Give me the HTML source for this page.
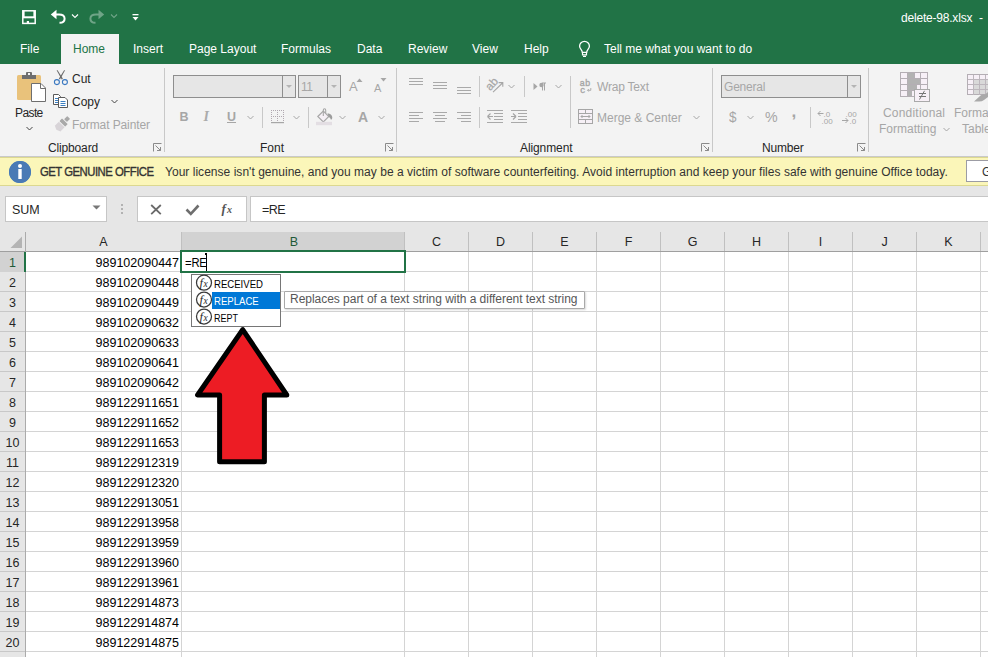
<!DOCTYPE html>
<html><head><meta charset="utf-8">
<style>
*{box-sizing:border-box}
html,body{margin:0;padding:0}
body{width:988px;height:657px;overflow:hidden;position:relative;background:#fff;font-family:"Liberation Sans",sans-serif;color:#262626}
.a{position:absolute}
.t{position:absolute;white-space:pre;line-height:1}
#top{left:0;top:0;width:988px;height:64px;background:#217346}
.tab{position:absolute;top:43px;font-size:12px;color:#fff;white-space:pre;line-height:1}
#ribbon{left:0;top:64px;width:988px;height:93px;background:#f3f3f3;border-bottom:1px solid #c9c9c9}
.sep{position:absolute;width:1px;background:#c8c8c8}
.dis{color:#a6a6a6}
.lbl{position:absolute;top:142px;font-size:12px;color:#262626;white-space:pre;line-height:1}
#yb{left:0;top:157px;width:988px;height:29px;background:#fbf6b9;border-top:1px solid #dcd890;border-bottom:1px solid #dcd890}
#fb{left:0;top:186px;width:988px;height:46px;background:#e6e6e6}
.box{position:absolute;background:#fff;border:1px solid #c6c6c6}
#hdr{left:0;top:232px;width:988px;height:20px;background:#e6e6e6;border-bottom:1px solid #9f9f9f}
.ch{position:absolute;top:232px;height:19px;font-size:12.5px;color:#262626;text-align:center;line-height:21px}
.cv{position:absolute;top:232px;width:1px;height:19px;background:#c0c0c0}
.gv{position:absolute;top:252px;width:1px;height:405px;background:#d4d4d4}
.gh{position:absolute;left:26px;width:962px;height:1px;background:#d4d4d4}
.rh{position:absolute;left:0;width:25px;height:20px;font-size:12.5px;text-align:center;line-height:22px;color:#262626}
.rn{position:absolute;left:26px;width:153px;height:20px;font-size:12.5px;text-align:right;line-height:23px;color:#000;font-kerning:none}
</style></head>
<body>
<!-- title + tabs -->
<div id="top" class="a"></div>
<div class="a" style="left:61px;top:34px;width:58px;height:30px;background:#f3f3f3"></div>
<div class="tab" style="left:20px">File</div>
<div class="tab" style="left:73px;color:#217346">Home</div>
<div class="tab" style="left:133px">Insert</div>
<div class="tab" style="left:189px">Page Layout</div>
<div class="tab" style="left:281px">Formulas</div>
<div class="tab" style="left:357px">Data</div>
<div class="tab" style="left:408px">Review</div>
<div class="tab" style="left:472px">View</div>
<div class="tab" style="left:524px">Help</div>
<div class="tab" style="left:604px">Tell me what you want to do</div>
<div class="t" style="left:901px;top:12px;font-size:12px;color:#fff;letter-spacing:-0.2px">delete-98.xlsx</div><div class="t" style="left:979px;top:12px;font-size:12px;color:#fff">-</div>

<!-- ribbon -->
<div id="ribbon" class="a"></div>
<!-- Clipboard group -->
<svg class="a" style="left:14px;top:70px" width="34" height="34" viewBox="0 0 34 34">
 <rect x="3" y="5" width="24" height="25" rx="1.5" fill="#e9c27b"/>
 <rect x="8" y="5" width="14" height="4" fill="#6e6e6e"/>
 <rect x="12" y="2" width="6" height="4" rx="1" fill="#6e6e6e"/>
 <rect x="14" y="3" width="2" height="2" fill="#f3f3f3"/>
 <path d="M17.5 13.5 H27 L31.5 18 V31.5 H17.5 Z" fill="#fff" stroke="#6e6e6e" stroke-width="1"/>
 <path d="M26.5 13.5 V18.5 H31.5" fill="none" stroke="#6e6e6e" stroke-width="1"/>
</svg>
<div class="t" style="left:15px;top:107px;font-size:12px;letter-spacing:-0.6px;color:#262626">Paste</div>
<svg class="a" style="left:26px;top:126px" width="7" height="5" viewBox="0 0 7 5"><path d="M0.5 1 L3.5 4 L6.5 1" fill="none" stroke="#444" stroke-width="1"/></svg>

<svg class="a" style="left:53px;top:69px" width="17" height="17" viewBox="0 0 17 17">
 <path d="M3.6 1.2 L4.6 1.2 L9.9 9.8 L8.7 10.6 Z" fill="#6a6a6a"/>
 <path d="M12.1 1.2 L11.1 1.2 L5.8 9.8 L7 10.6 Z" fill="#6a6a6a"/>
 <circle cx="3.9" cy="13.1" r="2.5" fill="none" stroke="#3a78c0" stroke-width="1.1"/>
 <circle cx="11.9" cy="13.1" r="2.5" fill="none" stroke="#3a78c0" stroke-width="1.1"/>
</svg>
<div class="t" style="left:72px;top:73px;font-size:12px;color:#262626">Cut</div>

<svg class="a" style="left:52px;top:93px" width="17" height="16" viewBox="0 0 17 16">
 <path d="M1.5 1.5 H6.5 L8.5 3.5 V11.5 H1.5 Z" fill="#fff" stroke="#5a5a5a" stroke-width="1"/>
 <path d="M6.5 4.5 H13 L15.5 7 V14.5 H6.5 Z" fill="#fff" stroke="#5a5a5a" stroke-width="1"/>
 <path d="M3 5.5 H6 M3 7.5 H6 M3 9.5 H6" stroke="#3c7fc1" stroke-width="1"/>
 <path d="M8.5 8.5 H13.5 M8.5 10.5 H13.5 M8.5 12.5 H13.5" stroke="#3c7fc1" stroke-width="1"/>
</svg>
<div class="t" style="left:72px;top:96px;font-size:12px;color:#262626">Copy</div>
<svg class="a" style="left:111px;top:99px" width="7" height="5" viewBox="0 0 7 5"><path d="M0.5 1 L3.5 4 L6.5 1" fill="none" stroke="#444" stroke-width="1"/></svg>

<svg class="a" style="left:52px;top:116px" width="18" height="16" viewBox="0 0 18 16">
 <g transform="rotate(45 10.6 7.6)">
  <rect x="8.6" y="-1" width="4" height="4.4" rx="0.6" fill="#a9a9a9"/>
  <rect x="6.6" y="4.4" width="8" height="3.6" rx="0.5" fill="#a9a9a9"/>
  <path d="M6.6 8.9 H14.6 V14.6 L10.6 16.4 L6.6 14.6 Z" fill="#d8d4d8"/>
 </g>
</svg>
<div class="t dis" style="left:72px;top:119px;font-size:12px;letter-spacing:-0.1px">Format Painter</div>
<div class="t" style="left:48px;top:142px;font-size:12px;letter-spacing:-0.15px;color:#262626">Clipboard</div>
<svg class="a" style="left:153px;top:143px" width="9" height="9" viewBox="0 0 9 9"><path d="M0.5 8.5 V0.5 H8.5 M2.5 2.5 L7.5 7.5 M4 7.5 H7.5 V4" fill="none" stroke="#8a8a8a" stroke-width="1"/></svg>
<div class="sep" style="left:164px;top:68px;height:84px"></div>
<!-- Font group -->
<div class="a" style="left:173px;top:75px;width:123px;height:23px;background:#e6e6e6;border:1px solid #8e8e8e"></div>
<div class="a" style="left:282px;top:75px;width:1px;height:23px;background:#8e8e8e"></div>
<svg class="a" style="left:285px;top:84px" width="8" height="5" viewBox="0 0 8 5"><path d="M1 1 H7 L4 4 Z" fill="#b4b4b4"/></svg>
<div class="a" style="left:298px;top:75px;width:43px;height:23px;background:#e6e6e6;border:1px solid #8e8e8e"></div>
<div class="a" style="left:327px;top:75px;width:1px;height:23px;background:#8e8e8e"></div>
<svg class="a" style="left:330px;top:84px" width="8" height="5" viewBox="0 0 8 5"><path d="M1 1 H7 L4 4 Z" fill="#b4b4b4"/></svg>
<div class="t dis" style="left:301px;top:81px;font-size:12px;letter-spacing:-0.5px">11</div>
<div class="t dis" style="left:349px;top:80px;font-size:13px">A</div>
<svg class="a" style="left:356px;top:78px" width="7" height="4" viewBox="0 0 7 4"><path d="M0.5 4 L3.5 0.5 L6.5 4 Z" fill="#a6a6a6"/></svg>
<div class="t dis" style="left:374px;top:83px;font-size:11px">A</div>
<svg class="a" style="left:380px;top:78px" width="7" height="4" viewBox="0 0 7 4"><path d="M0.5 0 L3.5 3.5 L6.5 0 Z" fill="#a6a6a6"/></svg>

<div class="t dis" style="left:179.5px;top:111px;font-size:12.5px;font-weight:bold">B</div>
<div class="t dis" style="left:203.5px;top:110px;font-size:14px;font-style:italic;font-weight:bold;font-family:'Liberation Serif',serif;color:#ababab">I</div>
<div class="t dis" style="left:227px;top:111px;font-size:12.5px;font-weight:bold;text-decoration:underline">U</div>
<svg class="a" style="left:247px;top:115px" width="7" height="5" viewBox="0 0 7 5"><path d="M0.5 1 L3.5 4 L6.5 1" fill="none" stroke="#a6a6a6" stroke-width="1"/></svg>
<div class="sep" style="left:262px;top:107px;height:21px"></div>
<svg class="a" style="left:270px;top:109px" width="15" height="15" viewBox="0 0 15 15">
 <g fill="#b0a8b0"><rect x="1" y="1" width="1" height="1"/><rect x="3" y="1" width="1" height="1"/><rect x="5" y="1" width="1" height="1"/><rect x="7" y="1" width="1" height="1"/><rect x="9" y="1" width="1" height="1"/><rect x="11" y="1" width="1" height="1"/><rect x="13" y="1" width="1" height="1"/>
 <rect x="1" y="3" width="1" height="1"/><rect x="7" y="3" width="1" height="1"/><rect x="13" y="3" width="1" height="1"/>
 <rect x="1" y="5" width="1" height="1"/><rect x="7" y="5" width="1" height="1"/><rect x="13" y="5" width="1" height="1"/>
 <rect x="1" y="7" width="1" height="1"/><rect x="3" y="7" width="1" height="1"/><rect x="5" y="7" width="1" height="1"/><rect x="7" y="7" width="1" height="1"/><rect x="9" y="7" width="1" height="1"/><rect x="11" y="7" width="1" height="1"/><rect x="13" y="7" width="1" height="1"/>
 <rect x="1" y="9" width="1" height="1"/><rect x="7" y="9" width="1" height="1"/><rect x="13" y="9" width="1" height="1"/>
 <rect x="1" y="11" width="1" height="1"/><rect x="7" y="11" width="1" height="1"/><rect x="13" y="11" width="1" height="1"/></g>
 <rect x="1" y="13" width="13" height="1.2" fill="#a6a6a6"/>
</svg>
<svg class="a" style="left:293px;top:115px" width="7" height="5" viewBox="0 0 7 5"><path d="M0.5 1 L3.5 4 L6.5 1" fill="none" stroke="#a6a6a6" stroke-width="1"/></svg>
<div class="sep" style="left:308px;top:107px;height:21px"></div>
<svg class="a" style="left:315px;top:107px" width="19" height="19" viewBox="0 0 19 19">
 <path d="M2.8 9.5 L8.3 4 L13.8 9.5 L8.3 15 Z" fill="#f5eff5" stroke="#a6a6a6" stroke-width="1.1"/>
 <path d="M8.3 9 V3.2 Q8.3 1.8 9.5 1.8 Q10.7 1.8 10.7 3.2 V6" fill="none" stroke="#a6a6a6" stroke-width="1.1"/>
 <path d="M12.5 6.3 Q16.8 6.8 17.3 10.2 Q17.4 12.6 16 12.8 Q15.4 10.8 13.6 9.8 Z" fill="#9c9c9c"/>
 <rect x="1" y="14.8" width="16" height="3.4" fill="#e3dee3"/>
</svg>
<svg class="a" style="left:339px;top:115px" width="7" height="5" viewBox="0 0 7 5"><path d="M0.5 1 L3.5 4 L6.5 1" fill="none" stroke="#a6a6a6" stroke-width="1"/></svg>
<div class="t dis" style="left:358px;top:110px;font-size:14px;font-weight:bold">A</div>
<svg class="a" style="left:378px;top:115px" width="7" height="5" viewBox="0 0 7 5"><path d="M0.5 1 L3.5 4 L6.5 1" fill="none" stroke="#a6a6a6" stroke-width="1"/></svg>
<div class="t" style="left:260px;top:142px;font-size:12px;color:#262626">Font</div>
<svg class="a" style="left:385px;top:143px" width="9" height="9" viewBox="0 0 9 9"><path d="M0.5 8.5 V0.5 H8.5 M2.5 2.5 L7.5 7.5 M4 7.5 H7.5 V4" fill="none" stroke="#8a8a8a" stroke-width="1"/></svg>
<div class="sep" style="left:396px;top:68px;height:84px"></div>
<!-- Alignment group -->
<svg class="a" style="left:405px;top:74px" width="70" height="24" viewBox="0 0 70 24" shape-rendering="crispEdges">
 <g fill="#a9a9a9">
  <rect x="4" y="4" width="14" height="1"/><rect x="4" y="7" width="14" height="1"/><rect x="4" y="10" width="14" height="1"/>
  <rect x="28" y="8" width="14" height="1"/><rect x="28" y="11" width="14" height="1"/><rect x="28" y="14" width="14" height="1"/>
  <rect x="52" y="13" width="14" height="1"/><rect x="52" y="16" width="14" height="1"/><rect x="52" y="19" width="14" height="1"/>
 </g>
</svg>
<svg class="a" style="left:405px;top:108px" width="70" height="18" viewBox="0 0 70 18" shape-rendering="crispEdges">
 <g fill="#a9a9a9">
  <rect x="4" y="4" width="14" height="1"/><rect x="4" y="7" width="10" height="1"/><rect x="4" y="10" width="14" height="1"/><rect x="4" y="13" width="10" height="1"/>
  <rect x="28" y="4" width="14" height="1"/><rect x="30" y="7" width="10" height="1"/><rect x="28" y="10" width="14" height="1"/><rect x="30" y="13" width="10" height="1"/>
  <rect x="52" y="4" width="14" height="1"/><rect x="56" y="7" width="10" height="1"/><rect x="52" y="10" width="14" height="1"/><rect x="56" y="13" width="10" height="1"/>
 </g>
</svg>
<div class="sep" style="left:479px;top:76px;height:21px"></div>
<div class="sep" style="left:479px;top:107px;height:21px"></div>
<svg class="a" style="left:485px;top:76px" width="20" height="19" viewBox="0 0 20 19">
 <text x="0" y="0" transform="translate(5.2,15.2) rotate(-48)" font-family="Liberation Sans" font-size="11.5" fill="#a6a6a6" stroke="#a6a6a6" stroke-width="0.25">ab</text>
 <path d="M8 16.2 L17.5 7 M13.6 6.6 H17.8 V10.8" fill="none" stroke="#a6a6a6" stroke-width="1.1"/>
</svg>
<svg class="a" style="left:508px;top:84px" width="7" height="5" viewBox="0 0 7 5"><path d="M0.5 1 L3.5 4 L6.5 1" fill="none" stroke="#a6a6a6" stroke-width="1"/></svg>
<div class="sep" style="left:524px;top:76px;height:21px"></div>
<svg class="a" style="left:533px;top:82px" width="14" height="9" viewBox="0 0 14 9">
 <path d="M0.5 1 L4.5 4.5 L0.5 8 Z" fill="#a6a6a6"/>
 <path d="M9 1 H13 M9.5 1 V8.5 M11.5 1 V8.5" stroke="#a6a6a6" stroke-width="1"/>
 <circle cx="8.5" cy="3" r="2.2" fill="#a6a6a6"/>
</svg>
<svg class="a" style="left:555px;top:84px" width="7" height="5" viewBox="0 0 7 5"><path d="M0.5 1 L3.5 4 L6.5 1" fill="none" stroke="#a6a6a6" stroke-width="1"/></svg>
<svg class="a" style="left:486px;top:108px" width="44" height="18" viewBox="0 0 44 18" shape-rendering="crispEdges">
 <g fill="#a9a9a9">
  <rect x="1" y="2" width="16" height="1"/><rect x="8" y="5" width="9" height="1"/><rect x="8" y="8" width="9" height="1"/><rect x="8" y="11" width="9" height="1"/><rect x="1" y="14" width="16" height="1"/>
  <rect x="25" y="2" width="16" height="1"/><rect x="32" y="5" width="9" height="1"/><rect x="32" y="8" width="9" height="1"/><rect x="32" y="11" width="9" height="1"/><rect x="25" y="14" width="16" height="1"/>
 </g>
 <path d="M1.5 8.5 L4.5 5.5 M1.5 8.5 L4.5 11.5 M2 8.5 H7" fill="none" stroke="#a6a6a6" stroke-width="1.2" shape-rendering="auto"/>
 <path d="M30 8.5 L27 5.5 M30 8.5 L27 11.5 M25 8.5 H29.5" fill="none" stroke="#a6a6a6" stroke-width="1.2" shape-rendering="auto"/>
</svg>
<div class="sep" style="left:570px;top:76px;height:52px"></div>
<svg class="a" style="left:579px;top:77px" width="15" height="17" viewBox="0 0 15 17">
 <text x="0.8" y="8.8" font-family="Liberation Sans" font-size="8.8" fill="#a6a6a6" stroke="#a6a6a6" stroke-width="0.35" letter-spacing="0.5">ab</text>
 <text x="1.2" y="15.6" font-family="Liberation Sans" font-size="9.5" fill="#a6a6a6" stroke="#a6a6a6" stroke-width="0.35">c</text>
 <path d="M11.8 11 V13.3 H8.6 M9.8 12 L8.5 13.3 L9.8 14.6" fill="none" stroke="#a6a6a6" stroke-width="0.9"/>
</svg>
<div class="t dis" style="left:597px;top:81px;font-size:12px;letter-spacing:-0.2px">Wrap Text</div>
<svg class="a" style="left:577px;top:108px" width="17" height="17" viewBox="0 0 17 17" shape-rendering="crispEdges">
 <rect x="1.5" y="1.5" width="14" height="14" fill="#f6f0f6" stroke="#a6a6a6" stroke-width="1"/>
 <path d="M1.5 5.5 H15.5 M1.5 11.5 H15.5 M8.5 1.5 V5.5 M8.5 11.5 V15.5" stroke="#a6a6a6" stroke-width="1" fill="none"/>
 <path d="M4 8.5 H13 M5.5 7 L4 8.5 L5.5 10 M11.5 7 L13 8.5 L11.5 10" stroke="#a6a6a6" stroke-width="1" fill="none" shape-rendering="auto"/>
</svg>
<div class="t dis" style="left:597px;top:112px;font-size:12px">Merge &amp; Center</div>
<svg class="a" style="left:693px;top:115px" width="7" height="5" viewBox="0 0 7 5"><path d="M0.5 1 L3.5 4 L6.5 1" fill="none" stroke="#a6a6a6" stroke-width="1"/></svg>
<div class="t" style="left:520px;top:142px;font-size:12px;letter-spacing:-0.1px;color:#262626">Alignment</div>
<svg class="a" style="left:701px;top:143px" width="9" height="9" viewBox="0 0 9 9"><path d="M0.5 8.5 V0.5 H8.5 M2.5 2.5 L7.5 7.5 M4 7.5 H7.5 V4" fill="none" stroke="#8a8a8a" stroke-width="1"/></svg>
<div class="sep" style="left:712px;top:68px;height:84px"></div>

<!-- Number group -->
<div class="a" style="left:721px;top:75px;width:140px;height:23px;background:#e6e6e6;border:1px solid #8e8e8e"></div>
<div class="a" style="left:847px;top:75px;width:1px;height:23px;background:#8e8e8e"></div>
<svg class="a" style="left:850px;top:84px" width="8" height="5" viewBox="0 0 8 5"><path d="M1 1 H7 L4 4 Z" fill="#b4b4b4"/></svg>
<div class="t dis" style="left:724px;top:81px;font-size:12px;letter-spacing:-0.2px">General</div>
<div class="t dis" style="left:728.5px;top:109px;font-size:15px;transform:scaleX(0.9);transform-origin:0 0">$</div>
<svg class="a" style="left:747px;top:115px" width="7" height="5" viewBox="0 0 7 5"><path d="M0.5 1 L3.5 4 L6.5 1" fill="none" stroke="#a6a6a6" stroke-width="1"/></svg>
<div class="t dis" style="left:765px;top:110px;font-size:14.2px">%</div>
<div class="t dis" style="left:791.5px;top:103px;font-size:17px;font-weight:bold">,</div>
<div class="sep" style="left:810px;top:107px;height:21px"></div>
<svg class="a" style="left:817px;top:110px" width="17" height="14" viewBox="0 0 17 14">
 <text x="6.5" y="6.5" font-family="Liberation Sans" font-size="8" fill="#a6a6a6">.0</text>
 <text x="4.5" y="13.5" font-family="Liberation Sans" font-size="8" fill="#a6a6a6">.00</text>
 <path d="M1 3.5 H6.5 M3.5 1 L1 3.5 L3.5 6" fill="none" stroke="#a6a6a6" stroke-width="1"/>
</svg>
<svg class="a" style="left:841px;top:110px" width="17" height="14" viewBox="0 0 17 14">
 <text x="4.5" y="6.5" font-family="Liberation Sans" font-size="8" fill="#a6a6a6">.00</text>
 <text x="8.5" y="13.5" font-family="Liberation Sans" font-size="8" fill="#a6a6a6">.0</text>
 <path d="M1 10.5 H7 M4.5 8 L7 10.5 L4.5 13" fill="none" stroke="#a6a6a6" stroke-width="1"/>
</svg>
<div class="t" style="left:762px;top:142px;font-size:12px;letter-spacing:-0.2px;color:#262626">Number</div>
<svg class="a" style="left:857px;top:143px" width="9" height="9" viewBox="0 0 9 9"><path d="M0.5 8.5 V0.5 H8.5 M2.5 2.5 L7.5 7.5 M4 7.5 H7.5 V4" fill="none" stroke="#8a8a8a" stroke-width="1"/></svg>
<div class="sep" style="left:868px;top:68px;height:84px"></div>

<!-- Styles group (partial) -->
<svg class="a" style="left:899px;top:71px" width="33" height="32" viewBox="0 0 33 32" shape-rendering="crispEdges">
 <rect x="1.5" y="1.5" width="27" height="24" fill="#f7f0f7" stroke="#b4aeb4" stroke-width="1"/>
 <path d="M1.5 7.5 H28.5 M1.5 13.5 H28.5 M1.5 19.5 H28.5 M8.5 1.5 V25.5 M15.5 1.5 V25.5 M21.5 1.5 V25.5" stroke="#b4aeb4" stroke-width="1" fill="none"/>
 <rect x="9" y="2" width="6" height="5" fill="#b2b2b2"/>
 <rect x="9" y="8" width="12" height="5" fill="#b2b2b2"/>
 <rect x="9" y="14" width="9" height="5" fill="#b2b2b2"/>
 <rect x="9" y="20" width="4" height="5" fill="#b2b2b2"/>
 <rect x="15.5" y="18.5" width="15" height="12" fill="#f7f0f7" stroke="#a9a9a9" stroke-width="1.2"/>
 <path d="M19.5 22.5 H26.5 M19.5 25.5 H26.5" stroke="#777" stroke-width="1" fill="none"/>
 <path d="M20.5 28.5 L25.5 19.8" stroke="#777" stroke-width="1" fill="none" shape-rendering="auto"/>
</svg>
<div class="t dis" style="left:883px;top:107px;font-size:12px;letter-spacing:0.2px">Conditional</div>
<div class="t dis" style="left:879px;top:123px;font-size:12px">Formatting</div>
<svg class="a" style="left:943px;top:127px" width="7" height="5" viewBox="0 0 7 5"><path d="M0.5 1 L3.5 4 L6.5 1" fill="none" stroke="#a6a6a6" stroke-width="1"/></svg>
<svg class="a" style="left:966px;top:73px" width="22" height="32" viewBox="0 0 22 32" shape-rendering="crispEdges">
 <rect x="1.5" y="1.5" width="28" height="20" fill="#f7f0f7" stroke="#b4aeb4" stroke-width="1"/>
 <rect x="8" y="7" width="20" height="14" fill="#d9d9d9"/>
 <path d="M1.5 6.5 H29.5 M1.5 11.5 H29.5 M1.5 16.5 H29.5 M7.5 1.5 V21.5 M13.5 1.5 V21.5 M19.5 1.5 V21.5" stroke="#bdb7bd" stroke-width="1" fill="none"/>
 <path d="M8 28.5 L14 23 Q16 20.5 19 21.5 L22 19 L22 24 L18 27 Q16 28.5 13 28.5 Z" fill="#a9a9a9" shape-rendering="auto"/>
</svg>
<div class="t dis" style="left:954px;top:107px;font-size:12px">Format</div>
<div class="t dis" style="left:962px;top:123px;font-size:12px">Table</div>




<!-- yellow bar -->
<div id="yb" class="a"></div>
<div class="a" style="left:9px;top:161px;width:22px;height:22px;border-radius:50%;background:#3e7bbd"></div>
<div class="t" style="left:40px;top:166px;font-size:12px;color:#333;-webkit-text-stroke:0.35px #333;letter-spacing:-0.5px;transform:scaleX(0.94);transform-origin:0 0">GET GENUINE OFFICE</div>
<div class="t" style="left:165px;top:166px;font-size:12px;color:#333;letter-spacing:0.03px">Your license isn't genuine, and you may be a victim of software counterfeiting. Avoid interruption and keep your files safe with genuine Office today.</div>

<!-- formula bar -->
<div id="fb" class="a"></div>
<div class="box" style="left:5px;top:196px;width:102px;height:26px"></div>
<div class="t" style="left:12px;top:204px;font-size:12.5px;color:#262626">SUM</div>
<div class="box" style="left:137px;top:196px;width:110px;height:26px"></div>
<div class="box" style="left:250px;top:196px;width:740px;height:26px"></div>
<div class="t" style="left:262px;top:204px;font-size:12.5px;color:#262626;letter-spacing:-0.6px">=RE</div>

<!-- headers -->
<div id="hdr" class="a"></div>
<div class="a" style="left:181px;top:232px;width:223px;height:19px;background:#d2d2d2"></div>
<div class="cv" style="left:25px"></div>
<div class="cv" style="left:181px"></div>
<div class="cv" style="left:404px"></div>
<div class="cv" style="left:468px"></div>
<div class="cv" style="left:532px"></div>
<div class="cv" style="left:596px"></div>
<div class="cv" style="left:660px"></div>
<div class="cv" style="left:724px"></div>
<div class="cv" style="left:788px"></div>
<div class="cv" style="left:852px"></div>
<div class="cv" style="left:916px"></div>
<div class="cv" style="left:980px"></div>
<div class="ch" style="left:26px;width:155px">A</div>
<div class="ch" style="left:183px;width:222px;color:#1f5a37">B</div>
<div class="ch" style="left:405px;width:63px">C</div>
<div class="ch" style="left:469px;width:63px">D</div>
<div class="ch" style="left:533px;width:63px">E</div>
<div class="ch" style="left:597px;width:63px">F</div>
<div class="ch" style="left:661px;width:63px">G</div>
<div class="ch" style="left:725px;width:63px">H</div>
<div class="ch" style="left:789px;width:63px">I</div>
<div class="ch" style="left:853px;width:63px">J</div>
<div class="ch" style="left:917px;width:63px">K</div>

<!-- grid -->
<div class="a" style="left:0;top:252px;width:25px;height:405px;background:#e6e6e6"></div>
<div class="a" style="left:25px;top:232px;width:1px;height:425px;background:#ababab"></div>
<div class="gv" style="left:181px"></div>
<div class="gv" style="left:404px"></div>
<div class="gv" style="left:468px"></div>
<div class="gv" style="left:532px"></div>
<div class="gv" style="left:596px"></div>
<div class="gv" style="left:660px"></div>
<div class="gv" style="left:724px"></div>
<div class="gv" style="left:788px"></div>
<div class="gv" style="left:852px"></div>
<div class="gv" style="left:916px"></div>
<div class="gv" style="left:980px"></div>

<div class="gh" style="top:271px"></div>
<div class="a" style="left:0;top:271px;width:25px;height:1px;background:#c8c8c8"></div>
<div class="gh" style="top:291px"></div>
<div class="a" style="left:0;top:291px;width:25px;height:1px;background:#c8c8c8"></div>
<div class="gh" style="top:311px"></div>
<div class="a" style="left:0;top:311px;width:25px;height:1px;background:#c8c8c8"></div>
<div class="gh" style="top:331px"></div>
<div class="a" style="left:0;top:331px;width:25px;height:1px;background:#c8c8c8"></div>
<div class="gh" style="top:351px"></div>
<div class="a" style="left:0;top:351px;width:25px;height:1px;background:#c8c8c8"></div>
<div class="gh" style="top:371px"></div>
<div class="a" style="left:0;top:371px;width:25px;height:1px;background:#c8c8c8"></div>
<div class="gh" style="top:391px"></div>
<div class="a" style="left:0;top:391px;width:25px;height:1px;background:#c8c8c8"></div>
<div class="gh" style="top:411px"></div>
<div class="a" style="left:0;top:411px;width:25px;height:1px;background:#c8c8c8"></div>
<div class="gh" style="top:431px"></div>
<div class="a" style="left:0;top:431px;width:25px;height:1px;background:#c8c8c8"></div>
<div class="gh" style="top:451px"></div>
<div class="a" style="left:0;top:451px;width:25px;height:1px;background:#c8c8c8"></div>
<div class="gh" style="top:471px"></div>
<div class="a" style="left:0;top:471px;width:25px;height:1px;background:#c8c8c8"></div>
<div class="gh" style="top:491px"></div>
<div class="a" style="left:0;top:491px;width:25px;height:1px;background:#c8c8c8"></div>
<div class="gh" style="top:511px"></div>
<div class="a" style="left:0;top:511px;width:25px;height:1px;background:#c8c8c8"></div>
<div class="gh" style="top:531px"></div>
<div class="a" style="left:0;top:531px;width:25px;height:1px;background:#c8c8c8"></div>
<div class="gh" style="top:551px"></div>
<div class="a" style="left:0;top:551px;width:25px;height:1px;background:#c8c8c8"></div>
<div class="gh" style="top:571px"></div>
<div class="a" style="left:0;top:571px;width:25px;height:1px;background:#c8c8c8"></div>
<div class="gh" style="top:591px"></div>
<div class="a" style="left:0;top:591px;width:25px;height:1px;background:#c8c8c8"></div>
<div class="gh" style="top:611px"></div>
<div class="a" style="left:0;top:611px;width:25px;height:1px;background:#c8c8c8"></div>
<div class="gh" style="top:631px"></div>
<div class="a" style="left:0;top:631px;width:25px;height:1px;background:#c8c8c8"></div>
<div class="gh" style="top:651px"></div>
<div class="a" style="left:0;top:651px;width:25px;height:1px;background:#c8c8c8"></div>
<div class="rh" style="top:252px;background:#d2d2d2;color:#1f5a37">1</div>
<div class="rn" style="top:252px">989102090447</div>
<div class="rh" style="top:272px">2</div>
<div class="rn" style="top:272px">989102090448</div>
<div class="rh" style="top:292px">3</div>
<div class="rn" style="top:292px">989102090449</div>
<div class="rh" style="top:312px">4</div>
<div class="rn" style="top:312px">989102090632</div>
<div class="rh" style="top:332px">5</div>
<div class="rn" style="top:332px">989102090633</div>
<div class="rh" style="top:352px">6</div>
<div class="rn" style="top:352px">989102090641</div>
<div class="rh" style="top:372px">7</div>
<div class="rn" style="top:372px">989102090642</div>
<div class="rh" style="top:392px">8</div>
<div class="rn" style="top:392px">989122911651</div>
<div class="rh" style="top:412px">9</div>
<div class="rn" style="top:412px">989122911652</div>
<div class="rh" style="top:432px">10</div>
<div class="rn" style="top:432px">989122911653</div>
<div class="rh" style="top:452px">11</div>
<div class="rn" style="top:452px">989122912319</div>
<div class="rh" style="top:472px">12</div>
<div class="rn" style="top:472px">989122912320</div>
<div class="rh" style="top:492px">13</div>
<div class="rn" style="top:492px">989122913051</div>
<div class="rh" style="top:512px">14</div>
<div class="rn" style="top:512px">989122913958</div>
<div class="rh" style="top:532px">15</div>
<div class="rn" style="top:532px">989122913959</div>
<div class="rh" style="top:552px">16</div>
<div class="rn" style="top:552px">989122913960</div>
<div class="rh" style="top:572px">17</div>
<div class="rn" style="top:572px">989122913961</div>
<div class="rh" style="top:592px">18</div>
<div class="rn" style="top:592px">989122914873</div>
<div class="rh" style="top:612px">19</div>
<div class="rn" style="top:612px">989122914874</div>
<div class="rh" style="top:632px">20</div>
<div class="rn" style="top:632px">989122914875</div>
<!-- QAT icons -->
<svg class="a" style="left:20px;top:8px" width="18" height="18" viewBox="0 0 18 18">
 <rect x="2.8" y="2.8" width="12.4" height="12.6" fill="none" stroke="#fff" stroke-width="1.5"/>
 <rect x="3" y="8.3" width="12" height="2" fill="#fff"/>
 <rect x="3" y="3" width="1.6" height="7" fill="#fff"/><rect x="13.4" y="3" width="1.6" height="7" fill="#fff"/>
 <rect x="6.8" y="13" width="2.2" height="2.5" fill="#fff"/>
</svg>
<svg class="a" style="left:49px;top:8px" width="18" height="18" viewBox="0 0 18 18">
 <path d="M1.8 6.5 L7.5 1.8 L7.5 11.2 Z" fill="#fff"/>
 <path d="M6 6.5 H10 Q15.6 6.5 15.6 10.7 Q15.6 14.8 10.5 14.8" fill="none" stroke="#fff" stroke-width="2"/>
</svg>
<svg class="a" style="left:71px;top:13px" width="8" height="6" viewBox="0 0 8 6"><path d="M1 1.5 L4 4.5 L7 1.5" fill="none" stroke="#fff" stroke-width="1.1"/></svg>
<svg class="a" style="left:88px;top:8px" width="18" height="18" viewBox="0 0 18 18" opacity="0.35">
 <path d="M16.2 6.5 L10.5 1.8 L10.5 11.2 Z" fill="#fff"/>
 <path d="M12 6.5 H8 Q2.4 6.5 2.4 10.7 Q2.4 14.8 7.5 14.8" fill="none" stroke="#fff" stroke-width="2"/>
</svg>
<svg class="a" style="left:110px;top:13px" width="8" height="6" viewBox="0 0 8 6" opacity="0.35"><path d="M1 1.5 L4 4.5 L7 1.5" fill="none" stroke="#fff" stroke-width="1.1"/></svg>
<svg class="a" style="left:131px;top:12px" width="9" height="10" viewBox="0 0 9 10">
 <rect x="1.5" y="2" width="6" height="1.3" fill="#fff"/>
 <path d="M1.5 5 H7.5 L4.5 8.5 Z" fill="#fff"/>
</svg>
<!-- lightbulb -->
<svg class="a" style="left:577px;top:40px" width="15" height="18" viewBox="0 0 15 18">
 <path d="M5.3 12.3 C5.3 10 2.6 8.6 2.6 6.2 A4.9 4.9 0 0 1 12.4 6.2 C12.4 8.6 9.7 10 9.7 12.3 Z" fill="none" stroke="#fff" stroke-width="1.3"/>
 <path d="M5.5 12.5 V14.8 H9.5 V12.5" fill="none" stroke="#fff" stroke-width="1.2"/>
 <path d="M6 16.4 H9" stroke="#fff" stroke-width="1.2"/>
</svg>
<!-- info icon -->
<svg class="a" style="left:9px;top:161px" width="22" height="22" viewBox="0 0 22 22">
 <circle cx="11" cy="11" r="10.9" fill="#4a7ab5"/>
 <circle cx="11" cy="5" r="2" fill="#fff"/>
 <rect x="9.3" y="8" width="3.4" height="10" fill="#fff"/>
</svg>
<div class="a" style="left:966px;top:160px;width:40px;height:22px;background:#fff;border:1px solid #9c9ca4"></div>
<div class="t" style="left:982px;top:166px;font-size:12px;color:#333">G</div>
<!-- formula bar icons -->
<svg class="a" style="left:92px;top:205px" width="9" height="5" viewBox="0 0 9 5"><path d="M0.5 0.5 H8.5 L4.5 4.5 Z" fill="#777"/></svg>
<svg class="a" style="left:120px;top:203px" width="4" height="12" viewBox="0 0 4 12"><circle cx="2" cy="2" r="1" fill="#a0a0a0"/><circle cx="2" cy="6" r="1" fill="#a0a0a0"/><circle cx="2" cy="10" r="1" fill="#a0a0a0"/></svg>
<svg class="a" style="left:150px;top:204px" width="12" height="11" viewBox="0 0 12 11"><path d="M1.2 1 L10.8 10.2 M10.8 1 L1.2 10.2" stroke="#6a6a6a" stroke-width="1.8"/></svg>
<svg class="a" style="left:185px;top:204px" width="15" height="12" viewBox="0 0 15 12"><path d="M1.5 5.5 L5.8 9.8 L13.5 1.5" fill="none" stroke="#6e6e6e" stroke-width="2.6"/></svg>
<svg class="a" style="left:220px;top:201px" width="16" height="16" viewBox="0 0 16 16"><text x="1.5" y="11.5" font-family="Liberation Serif" font-style="italic" font-weight="bold" font-size="13" fill="#555">f</text><text x="7" y="11.5" font-family="Liberation Serif" font-style="italic" font-weight="bold" font-size="10" fill="#555">x</text></svg>
<!-- corner triangle -->
<svg class="a" style="left:10px;top:236px" width="13" height="13" viewBox="0 0 13 13"><path d="M12 0.5 V12 H0.5 Z" fill="#b4b4b4"/></svg>
<!-- selection -->
<div class="a" style="left:24px;top:252px;width:2px;height:20px;background:#217346"></div>
<div class="a" style="left:180px;top:250px;width:226px;height:23px;border:2px solid #217346"></div>
<div class="t" style="left:184.6px;top:257px;font-size:12.5px;color:#000;letter-spacing:-0.2px;transform:scaleX(0.9);transform-origin:0 0">=RE</div>
<div class="a" style="left:206px;top:253px;width:1px;height:18px;background:#000"></div><div class="a" style="left:205px;top:253px;width:2px;height:2px;background:#000"></div>
<!-- autocomplete -->
<div class="a" style="left:191px;top:274px;width:90px;height:53px;background:#fff;border:1px solid #767676"></div>
<div class="a" style="left:212px;top:292px;width:68px;height:17px;background:#0078d7"></div>

<!-- autocomplete items -->
<svg class="a" style="left:195px;top:274px" width="18" height="52" viewBox="0 0 18 52">
 <g fill="none" stroke="#3a3a3a" stroke-width="1.25"><circle cx="9" cy="8.7" r="7.5"/><circle cx="9" cy="25.5" r="7.5"/><circle cx="9" cy="42.5" r="7.5"/></g>
 <g font-family="Liberation Serif" font-style="italic" fill="#2a2a2a">
  <text x="4.6" y="13.3" font-size="12.5">f</text><text x="8.6" y="13.3" font-size="9.5">x</text>
  <text x="4.6" y="30.1" font-size="12.5">f</text><text x="8.6" y="30.1" font-size="9.5">x</text>
  <text x="4.6" y="47.1" font-size="12.5">f</text><text x="8.6" y="47.1" font-size="9.5">x</text>
 </g>
</svg>
<div class="t" style="left:214px;top:279px;font-size:11px;color:#000;transform:scaleX(0.87);transform-origin:0 0">RECEIVED</div>
<div class="t" style="left:214px;top:296px;font-size:11px;color:#fff;transform:scaleX(0.87);transform-origin:0 0">REPLACE</div>
<div class="t" style="left:214px;top:313px;font-size:11px;color:#000;transform:scaleX(0.82);transform-origin:0 0">REPT</div>
<!-- tooltip -->
<div class="a" style="left:284px;top:291px;width:301px;height:18px;background:#fff;border:1px solid #a9a9a9;border-radius:1px;box-shadow:1px 1px 2px rgba(0,0,0,0.15)"></div>
<div class="t" style="left:290px;top:293px;font-size:12px;color:#575757;letter-spacing:-0.03px">Replaces part of a text string with a different text string</div>
<!-- red arrow -->
<svg class="a" style="left:180px;top:310px" width="120" height="170" viewBox="180 310 120 170">
 <path d="M242.7 329.6 L197.6 395 L219.6 395 L219.6 461.8 L264.4 461.8 L264.4 395 L286.8 395 Z" fill="#ed1c24" stroke="#000" stroke-width="5" stroke-linejoin="round"/>
</svg>

</body></html>
